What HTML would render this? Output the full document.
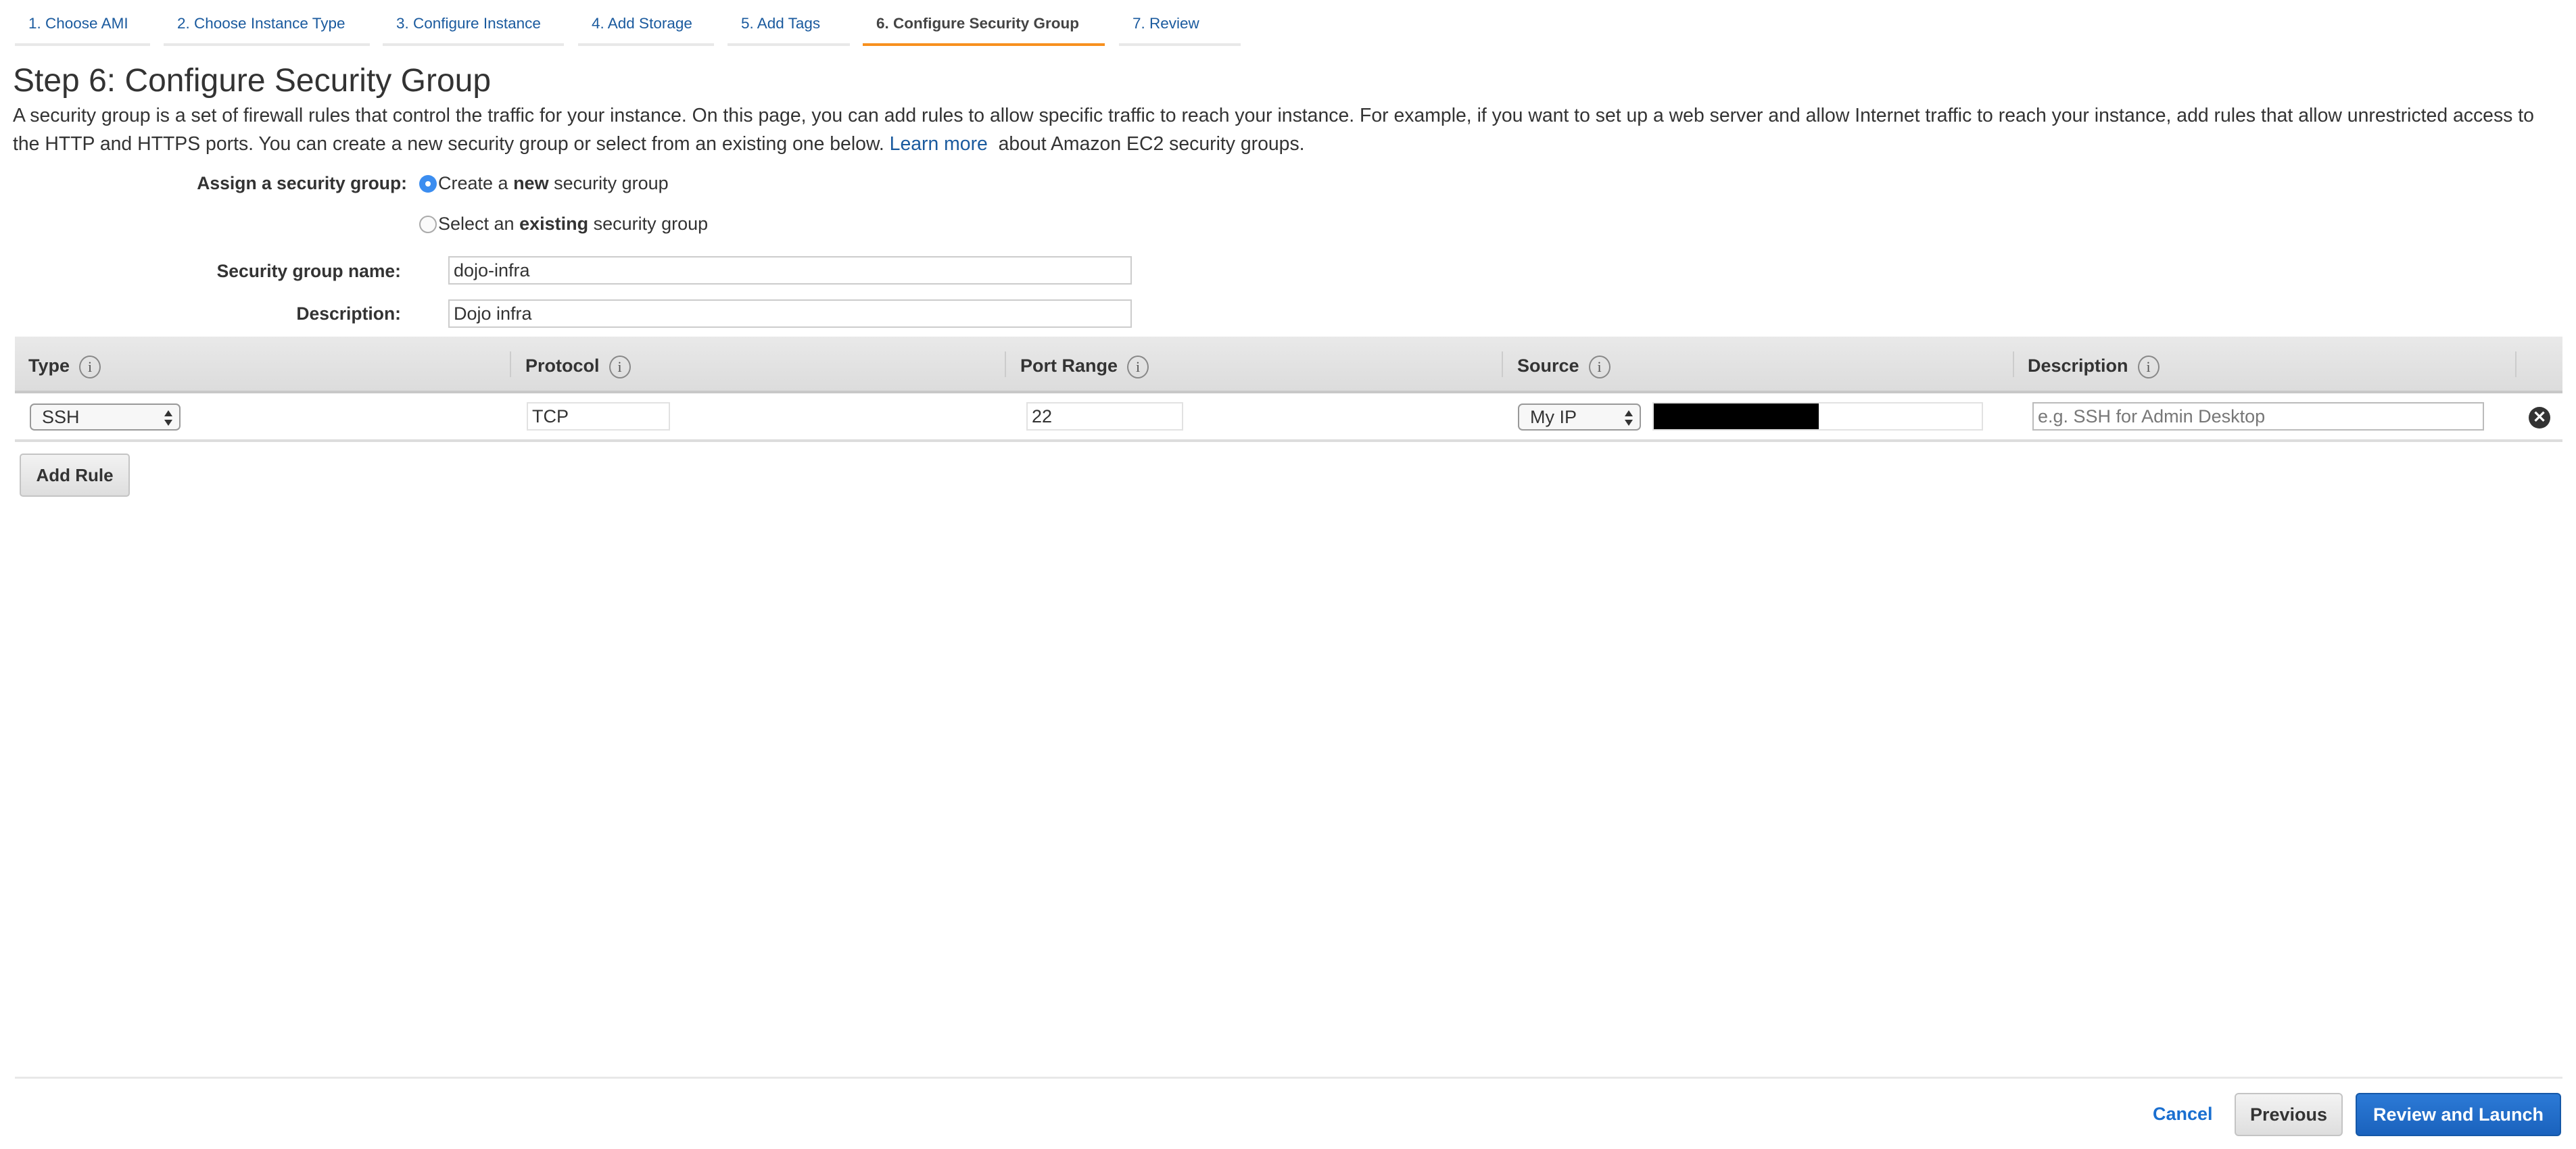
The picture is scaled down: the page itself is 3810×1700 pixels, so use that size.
<!DOCTYPE html>
<html><head><meta charset="utf-8"><style>
*{margin:0;padding:0;box-sizing:border-box}
body{width:3810px;height:1700px;background:#fff;font-family:"Liberation Sans",Arial,sans-serif;color:#333;position:relative;overflow:hidden}
.a{position:absolute;white-space:nowrap}
.tab{position:absolute;top:0;height:68px;border-bottom:4px solid #e8e8e8;font-size:22.5px;color:#1a5a9e;padding-top:22px;padding-left:20px}
.tab.on{border-bottom-color:#f7901e;color:#444;font-weight:bold}
.lbl{position:absolute;font-weight:bold;font-size:26.5px;color:#333;text-align:right}
.inp{position:absolute;border:2px solid #ccc;background:#fff;font-size:27px;padding-left:6px;line-height:38px}
.sel{position:absolute;border:2px solid #999;border-radius:7px;background:#f7f7f7;font-size:27px;padding-left:16px;line-height:36px}
.sel:after{content:"";position:absolute;right:10px;top:8px;border:6px solid transparent;border-bottom:9px solid #333;border-top:0}
.sel:before{content:"";position:absolute;right:10px;top:22px;border:6px solid transparent;border-top:9px solid #333;border-bottom:0}
.th{position:absolute;top:526px;font-weight:bold;font-size:27px;color:#333}
.info{display:inline-block;width:32px;height:34px;border:2px solid #888;border-radius:50%;font-size:22px;line-height:30px;text-align:center;color:#555;font-weight:normal;margin-left:14px;vertical-align:middle;font-family:"Liberation Serif",serif}
.sep{position:absolute;top:520px;width:2px;height:38px;background:#ccc}
.radio{position:absolute;width:26px;height:26px;border-radius:50%}
</style></head><body>
<div class="tab" style="left:22px;width:200px">1. Choose AMI</div>
<div class="tab" style="left:242px;width:305px">2. Choose Instance Type</div>
<div class="tab" style="left:566px;width:268px">3. Configure Instance</div>
<div class="tab" style="left:855px;width:201px">4. Add Storage</div>
<div class="tab" style="left:1076px;width:181px">5. Add Tags</div>
<div class="tab on" style="left:1276px;width:358px">6. Configure Security Group</div>
<div class="tab" style="left:1655px;width:180px">7. Review</div>

<div class="a" style="left:19px;top:92px;font-size:48px;color:#333">Step 6: Configure Security Group</div>
<div class="a" style="left:19px;top:150px;font-size:28.4px;line-height:42px;white-space:normal;width:3770px">A security group is a set of firewall rules that control the traffic for your instance. On this page, you can add rules to allow specific traffic to reach your instance. For example, if you want to set up a web server and allow Internet traffic to reach your instance, add rules that allow unrestricted access to the HTTP and HTTPS ports. You can create a new security group or select from an existing one below. <span style="color:#1a5a9e">Learn more</span>&nbsp; about Amazon EC2 security groups.</div>

<div class="lbl" style="right:3208px;top:256px">Assign a security group:</div>
<div class="radio" style="left:620px;top:259px;background:#3b8df0"><div style="position:absolute;left:9px;top:9px;width:8px;height:8px;border-radius:50%;background:#fff"></div></div>
<div class="a" style="left:648px;top:256px;font-size:27px">Create a <b>new</b> security group</div>
<div class="radio" style="left:620px;top:319px;border:2px solid #aaa;background:#fafafa"></div>
<div class="a" style="left:648px;top:316px;font-size:27px">Select an <b>existing</b> security group</div>

<div class="lbl" style="right:3217px;top:386px">Security group name:</div>
<div class="inp" style="left:663px;top:379px;width:1011px;height:42px">dojo-infra</div>
<div class="lbl" style="right:3217px;top:449px">Description:</div>
<div class="inp" style="left:663px;top:443px;width:1011px;height:42px">Dojo infra</div>

<div class="a" style="left:22px;top:498px;width:3768px;height:84px;background:linear-gradient(#e9e9e9,#dcdcdc);border-bottom:4px solid #c8c8c8"></div>
<div class="th" style="left:42px">Type<span class="info">i</span></div>
<div class="sep" style="left:754px"></div>
<div class="th" style="left:777px">Protocol<span class="info">i</span></div>
<div class="sep" style="left:1486px"></div>
<div class="th" style="left:1509px">Port Range<span class="info">i</span></div>
<div class="sep" style="left:2221px"></div>
<div class="th" style="left:2244px">Source<span class="info">i</span></div>
<div class="sep" style="left:2977px"></div>
<div class="th" style="left:2999px">Description<span class="info">i</span></div>
<div class="sep" style="left:3720px"></div>

<div class="sel" style="left:44px;top:597px;width:223px;height:40px">SSH</div>
<div class="inp" style="left:779px;top:595px;width:212px;height:42px;border-color:#e2e2e2">TCP</div>
<div class="inp" style="left:1518px;top:595px;width:232px;height:42px;border-color:#e2e2e2">22</div>
<div class="sel" style="left:2245px;top:597px;width:182px;height:40px">My IP</div>
<div class="inp" style="left:2444px;top:595px;width:489px;height:42px;border-color:#e2e2e2;padding:0"><div style="width:244px;height:38px;background:#000"></div></div>
<div class="inp" style="left:3006px;top:595px;width:668px;height:42px;border-color:#bbb;color:#777">e.g. SSH for Admin Desktop</div>
<div class="a" style="left:3740px;top:602px;width:32px;height:32px;border-radius:50%;background:#333;color:#fff;font-size:24px;line-height:32px;text-align:center;font-weight:bold">✕</div>
<div class="a" style="left:22px;top:650px;width:3768px;height:4px;background:#ddd"></div>

<div class="a" style="left:29px;top:671px;width:163px;height:64px;border:2px solid #c4c4c4;border-radius:5px;background:linear-gradient(#f2f2f2,#dedede);font-weight:bold;font-size:26px;line-height:60px;text-align:center">Add Rule</div>

<div class="a" style="left:22px;top:1593px;width:3768px;height:3px;background:#e8e8e8"></div>
<div class="a" style="left:3184px;top:1633px;font-weight:bold;font-size:27px;color:#1a6fd0">Cancel</div>
<div class="a" style="left:3305px;top:1617px;width:160px;height:64px;border:2px solid #c4c4c4;border-radius:6px;background:linear-gradient(#f3f3f3,#dedede);font-weight:bold;font-size:27px;line-height:60px;text-align:center">Previous</div>
<div class="a" style="left:3484px;top:1617px;width:304px;height:64px;border:2px solid #1558a8;border-radius:6px;background:linear-gradient(#2c7ad6,#1a62bd);font-weight:bold;font-size:27px;line-height:60px;text-align:center;color:#fff">Review and Launch</div>
</body></html>
